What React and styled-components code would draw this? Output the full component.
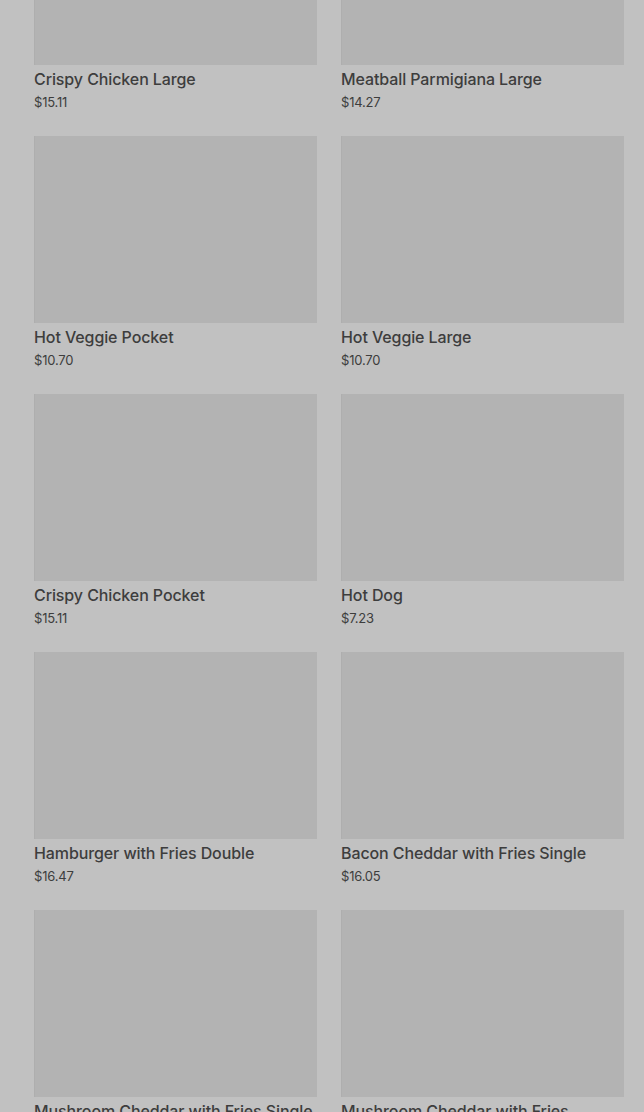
import React from 'react';
import styled, { createGlobalStyle } from 'styled-components';

const GlobalStyle = createGlobalStyle`
  html, body {
    margin: 0;
    padding: 0;
    background-color: #c1c1c1;
    font-family: Inter, "Noto Sans", sans-serif;
  }
`;

const Page = styled.div`
  height: 1112px;
  overflow: hidden;
  background-color: #c1c1c1;
`;

const Grid = styled.div`
  display: grid;
  grid-template-columns: repeat(2, 283px);
  align-items: start;
  column-gap: 24px;
  row-gap: 25px;
  padding: 0 20px 0 34px;
  margin-top: -122px;
`;

const Card = styled.div`
  display: flex;
  flex-direction: column;
`;

const Thumb = styled.div`
  height: 187px;
  background-color: #b3b3b3;
  box-shadow: inset 1px 0 1px rgba(0, 0, 0, 0.03);
`;

const Title = styled.h3`
  margin: 4px 0 0;
  font-size: 16px;
  line-height: 20px;
  font-weight: 500;
  letter-spacing: -0.1px;
  color: #3d3d3d;
`;

const Price = styled.p`
  margin: 4px 0 0;
  font-size: 13px;
  line-height: 18px;
  font-weight: 400;
  letter-spacing: -0.2px;
  color: #3d3d3d;
`;

const items = [
  { name: 'Crispy Chicken Large', price: '$15.11' },
  { name: 'Meatball Parmigiana Large', price: '$14.27' },
  { name: 'Hot Veggie Pocket', price: '$10.70' },
  { name: 'Hot Veggie Large', price: '$10.70' },
  { name: 'Crispy Chicken Pocket', price: '$15.11' },
  { name: 'Hot Dog', price: '$7.23' },
  { name: 'Hamburger with Fries Double', price: '$16.47' },
  { name: 'Bacon Cheddar with Fries Single', price: '$16.05' },
  { name: 'Mushroom Cheddar with Fries Single', price: '$16.47' },
  { name: 'Mushroom Cheddar with Fries Double', price: '$18.95' },
];

const App = () => (
  <>
    <GlobalStyle />
    <Page>
      <Grid>
        {items.map((item) => (
          <Card key={item.name}>
            <Thumb />
            <Title>{item.name}</Title>
            <Price>{item.price}</Price>
          </Card>
        ))}
      </Grid>
    </Page>
  </>
);

export default App;
